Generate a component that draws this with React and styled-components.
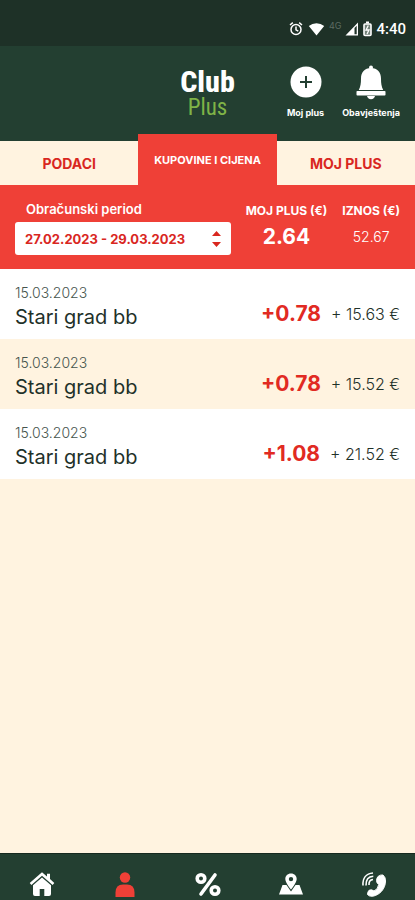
import React from "react";
import { useState } from "react";
import styled, { createGlobalStyle } from "styled-components";

const GlobalStyle = createGlobalStyle`
  * {
    box-sizing: border-box;
  }
  body {
    margin: 0;
    background-color: #fff3e0;
    font-family: Inter, "Noto Sans", sans-serif;
  }
  button, select {
    font-family: inherit;
    border: none;
    padding: 0;
    cursor: pointer;
  }
`;

const Container = styled.div`
  display: flex;
  flex-direction: column;
  min-height: 100vh;
`;

const StatusBar = styled.div`
  display: flex;
  justify-content: flex-end;
  align-items: flex-end;
  gap: 4px;
  height: 46px;
  padding: 0 9px 8px;
  background-color: #1e3127;
  color: white;

  svg {
    height: 18px;
  }
  .network {
    align-self: center;
    margin-top: 14px;
    font-size: 9px;
    line-height: 12px;
    color: #5d6c63;
  }
  .time {
    font-family: Roboto, sans-serif;
    font-size: 15px;
    font-weight: 500;
    line-height: 18px;
  }
`;

const Header = styled.header`
  display: grid;
  grid-template-columns: 1fr auto 1fr;
  height: 95px;
  padding: 0 15px;
  background-color: #233f31;
`;

const Logo = styled.div`
  display: flex;
  flex-direction: column;
  align-items: center;
  padding-top: 22px;
  font-family: "Roboto Condensed", "Liberation Sans Narrow", "Liberation Sans", sans-serif;
  color: white;

  .club {
    font-size: 30px;
    font-weight: 800;
    line-height: 28px;
  }
  .plus {
    font-size: 23px;
    line-height: 24px;
    color: #7fb347;
  }
`;

const Actions = styled.div`
  display: flex;
  justify-content: flex-end;
  align-items: flex-start;
  gap: 18px;
  padding-top: 18px;
`;

const ActionButton = styled.button`
  display: flex;
  flex-direction: column;
  align-items: center;
  gap: 7px;
  background: none;
  color: white;
  font-size: 9px;
  font-weight: 700;
  line-height: 12px;
`;

const Tabs = styled.nav`
  display: flex;
  align-items: flex-end;
  background-color: #233f31;
`;

const Tab = styled.button`
  flex: 1;
  height: ${(props) => (props.$active ? "51px" : "44px")};
  margin-top: ${(props) => (props.$active ? "-7px" : "0")};
  background-color: ${(props) => (props.$active ? "#ef4037" : "#fff3e0")};
  color: ${(props) => (props.$active ? "white" : "#d9271f")};
  font-size: ${(props) => (props.$active ? "11px" : "14px")};
  font-weight: 700;
  white-space: nowrap;
`;

const Summary = styled.section`
  display: flex;
  justify-content: space-between;
  height: 84px;
  padding: 15px 15px 0;
  background-color: #ef4037;
  color: white;
`;

const Period = styled.div`
  display: flex;
  flex-direction: column;
  flex: 0 0 56%;
  gap: 4px;

  label {
    padding-left: 11px;
    font-size: 13px;
    font-weight: 600;
    line-height: 18px;
  }
`;

const SelectBox = styled.div`
  display: grid;
  align-items: center;

  select, svg {
    grid-area: 1 / 1;
  }
  select {
    appearance: none;
    width: 100%;
    height: 33px;
    padding: 0 30px 0 10px;
    border-radius: 3px;
    background-color: white;
    color: #d9271f;
    font-size: 13px;
    font-weight: 700;
  }
  svg {
    justify-self: end;
    margin-right: 10px;
    pointer-events: none;
  }
`;

const Total = styled.div`
  display: flex;
  flex-direction: column;
  align-items: center;
  white-space: nowrap;

  .label {
    font-size: 12px;
    font-weight: 700;
    line-height: 22px;
  }
  .value {
    font-size: ${(props) => (props.$strong ? "21px" : "14px")};
    font-weight: ${(props) => (props.$strong ? 700 : 300)};
    line-height: 30px;
  }
`;

const List = styled.ul`
  flex: 1;
  margin: 0;
  padding: 0;
  list-style: none;
`;

const Row = styled.li`
  display: flex;
  justify-content: space-between;
  height: 70px;
  padding: 14px 15px 0;
  color: #1f3129;

  &:nth-child(odd) {
    background-color: white;
  }
  .date {
    font-size: 14px;
    font-weight: 300;
    line-height: 20px;
    color: #46544d;
  }
  .store {
    font-size: 20px;
    line-height: 28px;
  }
`;

const Amounts = styled.div`
  display: flex;
  align-items: flex-end;
  gap: 10px;
  height: 46px;
  line-height: 30px;

  .points {
    font-size: 21px;
    font-weight: 700;
    color: #e12a22;
  }
  .price {
    font-size: 16px;
    font-weight: 300;
  }
`;

const BottomNav = styled.nav`
  display: flex;
  height: 47px;
  padding-top: 17px;
  background-color: #233f31;
  border-top: 1px solid #16291f;
`;

const NavButton = styled.button`
  display: flex;
  flex: 1;
  justify-content: center;
  align-items: flex-start;
  background: none;
  color: ${(props) => (props.$active ? "#ef4037" : "white")};
`;

const AlarmIcon = () => (
  <svg width="16" viewBox="0 0 16 18" fill="none" stroke="currentColor" strokeWidth="1.5">
    <circle cx="8" cy="9.5" r="5" />
    <path d="M8 6.5v3.3l2.3 1.3M2 5l2.8-2.3M14 5l-2.8-2.3" />
  </svg>
);

const WifiIcon = () => (
  <svg width="17" viewBox="0 0 17 18" fill="currentColor">
    <path d="M8.5 15.5L.8 6.1Q4.2 3.2 8.5 3.2T16.2 6.1Z" />
  </svg>
);

const SignalIcon = () => (
  <svg width="14" viewBox="0 0 14 18" fill="currentColor">
    <path d="M13 2.5V15.5H.5ZM11.7 5.8L9.5 8v6.2h2.2Z" fillRule="evenodd" />
  </svg>
);

const BatteryIcon = () => (
  <svg width="9" viewBox="0 0 9 18" fill="none" stroke="currentColor" strokeWidth="1.6">
    <path d="M3 2.5h3" strokeWidth="2" />
    <rect x="1" y="4" width="7" height="11.5" rx="1" fill="#718077" />
    <path d="M5.3 5.5L3 10h3l-2 4" strokeWidth="1.3" />
  </svg>
);

const PlusIcon = () => (
  <svg width="32" height="36" viewBox="0 0 32 36">
    <circle cx="16" cy="18" r="15.5" fill="white" />
    <path d="M16 12v12M10 18h12" stroke="#233f31" strokeWidth="2" />
  </svg>
);

const BellIcon = () => (
  <svg width="32" height="36" viewBox="0 0 32 36" fill="white">
    <circle cx="16" cy="3.5" r="2" />
    <path d="M16 4c-6.5 0-10 4.5-10 10.5 0 5-.5 8-2.2 11.5h24.4C26.5 22.5 26 19.5 26 14.5 26 8.5 22.5 4 16 4Z" />
    <rect x="1.5" y="27" width="29" height="4.5" rx=".8" />
    <path d="M12 32h8c-.4 2-1.8 3.2-4 3.2S12.4 34 12 32Z" />
  </svg>
);

const HomeIcon = () => (
  <svg width="26" height="26" viewBox="0 0 26 26" fill="currentColor">
    <path d="M13 1.3l5 4.2V2.8h3V8l4.3 4-1.7 2L13 4.8 2.4 14 .7 12Z" />
    <path d="M13 6.5l9 7.7V23q0 2-2 2h-4.700v-7h-4.600v7H6q-2 0-2-2v-8.800Z" />
  </svg>
);

const UserIcon = () => (
  <svg width="26" height="26" viewBox="0 0 26 26" fill="currentColor">
    <circle cx="13" cy="6.5" r="5.2" />
    <path d="M3.5 26v-4.5q0-8 7.5-8h4q7.5 0 7.5 8V26Z" />
  </svg>
);

const PercentIcon = () => (
  <svg width="26" height="26" viewBox="0 0 26 26" fill="none" stroke="currentColor" strokeWidth="3.6">
    <circle cx="6" cy="7.5" r="3.8" />
    <circle cx="20" cy="19.5" r="3.8" />
    <path d="M20 4L6 23" strokeLinecap="round" />
  </svg>
);

const MapIcon = () => (
  <svg width="26" height="26" viewBox="0 0 26 26" fill="currentColor">
    <path d="M13 2.500c-3.400 0-5.700 2.400-5.700 5.500C7.300 12 13 18.500 13 18.500s5.700-6.500 5.700-10.500C18.700 4.900 16.400 2.500 13 2.500Zm0 3.400a2.200 2.200 0 1 1 0 4.400 2.200 2.200 0 0 1 0-4.400Z" fillRule="evenodd" />
    <path d="M4.500 14h4L13 20.500l4.500-6.500h4L25 23.500H1Z" />
  </svg>
);

const PhoneIcon = () => (
  <svg width="26" height="26" viewBox="0 0 26 26">
    <path d="M17 5.500q2.500-2 5-1.500 2.500 2 2.500 6c0 7.500-5.500 14-13 15.300q-3.500.2-5-1.800 0-2.500 1.500-4.200 2.500-1.300 5 .7 4-1.500 4.700-6.500-2.200-1.500-2.200-4 .2-2.500 1.500-4Z" fill="currentColor" stroke="currentColor" strokeLinejoin="round" />
    <path d="M2 14.500C1.500 7.500 5 2.500 12 2M5 14.500C4.800 9 7.300 5.500 12.300 5.200M8 14c-.2-3 1.200-5.200 4-5.500" fill="none" stroke="currentColor" strokeWidth="1.6" />
  </svg>
);

const tabs = ["PODACI", "KUPOVINE I CIJENA", "MOJ PLUS"];

const purchases = [
  { id: 1, date: "15.03.2023", store: "Stari grad bb", points: "+0.78", price: "+ 15.63 €" },
  { id: 2, date: "15.03.2023", store: "Stari grad bb", points: "+0.78", price: "+ 15.52 €" },
  { id: 3, date: "15.03.2023", store: "Stari grad bb", points: "+1.08", price: "+ 21.52 €" },
];

const navIcons = [HomeIcon, UserIcon, PercentIcon, MapIcon, PhoneIcon];

const App = () => {
  const [activeTab, setActiveTab] = useState(1);
  const [activeNav, setActiveNav] = useState(1);

  return (
    <Container>
      <GlobalStyle />
      <StatusBar>
        <AlarmIcon />
        <WifiIcon />
        <span className="network">4G</span>
        <SignalIcon />
        <BatteryIcon />
        <span className="time">4:40</span>
      </StatusBar>
      <Header>
        <span />
        <Logo>
          <span className="club">Club</span>
          <span className="plus">Plus</span>
        </Logo>
        <Actions>
          <ActionButton>
            <PlusIcon />
            Moj plus
          </ActionButton>
          <ActionButton>
            <BellIcon />
            Obavještenja
          </ActionButton>
        </Actions>
      </Header>
      <Tabs>
        {tabs.map((tab, i) => (
          <Tab key={tab} $active={i === activeTab} onClick={() => setActiveTab(i)}>{tab}</Tab>
        ))}
      </Tabs>
      <Summary>
        <Period>
          <label htmlFor="period">Obračunski period</label>
          <SelectBox>
            <select id="period">
              <option>27.02.2023 - 29.03.2023</option>
            </select>
            <svg width="9" height="16" viewBox="0 0 9 16" fill="#d9271f">
              <path d="M4.5 0L9 5H0ZM4.5 16L0 11h9Z" />
            </svg>
          </SelectBox>
        </Period>
        <Total $strong>
          <span className="label">MOJ PLUS (€)</span>
          <span className="value">2.64</span>
        </Total>
        <Total>
          <span className="label">IZNOS (€)</span>
          <span className="value">52.67</span>
        </Total>
      </Summary>
      <List>
        {purchases.map((item) => (
          <Row key={item.id}>
            <div>
              <div className="date">{item.date}</div>
              <div className="store">{item.store}</div>
            </div>
            <Amounts>
              <span className="points">{item.points}</span>
              <span className="price">{item.price}</span>
            </Amounts>
          </Row>
        ))}
      </List>
      <BottomNav>
        {navIcons.map((Icon, i) => (
          <NavButton key={i} $active={i === activeNav} onClick={() => setActiveNav(i)}>
            <Icon />
          </NavButton>
        ))}
      </BottomNav>
    </Container>
  );
}

export default App;
